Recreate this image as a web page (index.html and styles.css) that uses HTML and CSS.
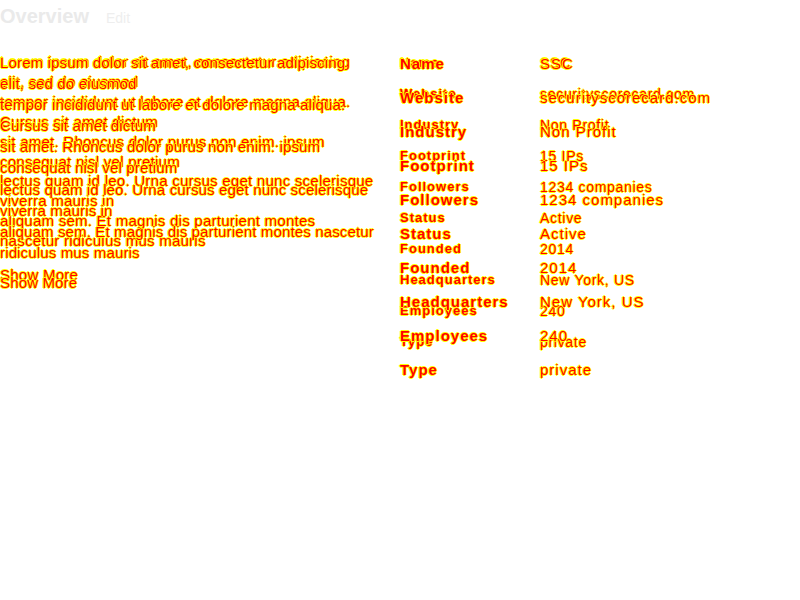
FILE: index.html
```html
<!DOCTYPE html>
<html>
<head>
<meta charset="utf-8">
<link rel="stylesheet" href="styles.css">
</head>
<body>
<header class="top">
  <h1 class="title">Overview</h1>
  <span class="edit">Edit</span>
</header>
<main class="stack">
  <section class="layer layer-a">
    <div class="about">
      <div class="text">
        <span>Lorem ipsum dolor sit amet, consectetur adipiscing</span>
        <span>elit, sed do eiusmod</span>
        <span>tempor incididunt ut labore et dolore magna aliqua.</span>
        <span>Cursus sit amet dictum</span>
        <span>sit amet. Rhoncus dolor purus non enim. ipsum</span>
        <span>consequat nisl vel pretium</span>
        <span>lectus quam id leo. Urna cursus eget nunc scelerisque</span>
        <span>viverra mauris in</span>
        <span>aliquam sem. Et magnis dis parturient montes</span>
        <span>nascetur ridiculus mus mauris</span>
      </div>
      <div class="more">Show More</div>
    </div>
    <dl class="facts">
      <div class="row"><dt>Name</dt><dd>SSC</dd></div>
      <div class="row"><dt>Website</dt><dd>securityscorecard.com</dd></div>
      <div class="row"><dt>Industry</dt><dd>Non Profit</dd></div>
      <div class="row"><dt>Footprint</dt><dd>15 IPs</dd></div>
      <div class="row"><dt>Followers</dt><dd>1234 companies</dd></div>
      <div class="row"><dt>Status</dt><dd>Active</dd></div>
      <div class="row"><dt>Founded</dt><dd>2014</dd></div>
      <div class="row"><dt>Headquarters</dt><dd>New York, US</dd></div>
      <div class="row"><dt>Employees</dt><dd>240</dd></div>
      <div class="row"><dt>Type</dt><dd>private</dd></div>
    </dl>
  </section>
  <section class="layer layer-b">
    <div class="about">
      <div class="text">
        <span>Lorem ipsum dolor sit amet, consectetur adipiscing</span>
        <span>elit, sed do eiusmod</span>
        <span>tempor incididunt ut labore et dolore magna aliqua.</span>
        <span>Cursus sit amet dictum</span>
        <span>sit amet. Rhoncus dolor purus non enim. ipsum</span>
        <span>consequat nisl vel pretium</span>
        <span>lectus quam id leo. Urna cursus eget nunc scelerisque</span>
        <span>viverra mauris in</span>
        <span>aliquam sem. Et magnis dis parturient montes nascetur</span>
        <span>ridiculus mus mauris</span>
      </div>
      <div class="more">Show More</div>
    </div>
    <dl class="facts">
      <div class="row"><dt>Name</dt><dd>SSC</dd></div>
      <div class="row"><dt>Website</dt><dd>securityscorecard.com</dd></div>
      <div class="row"><dt>Industry</dt><dd>Non Profit</dd></div>
      <div class="row"><dt>Footprint</dt><dd>15 IPs</dd></div>
      <div class="row"><dt>Followers</dt><dd>1234 companies</dd></div>
      <div class="row"><dt>Status</dt><dd>Active</dd></div>
      <div class="row"><dt>Founded</dt><dd>2014</dd></div>
      <div class="row"><dt>Headquarters</dt><dd>New York, US</dd></div>
      <div class="row"><dt>Employees</dt><dd>240</dd></div>
      <div class="row"><dt>Type</dt><dd>private</dd></div>
    </dl>
  </section>
</main>
</body>
</html>
```
FILE: styles.css
```css
html, body {
  margin: 0;
  padding: 0;
  background: #ffffff;
  font-family: "Liberation Sans", Arial, sans-serif;
}

.top {
  display: flex;
  align-items: baseline;
  gap: 17px;
  height: 36px;
  padding-top: 3px;
  box-sizing: border-box;
}

.title {
  margin: 0;
  font-size: 20px;
  font-weight: bold;
  color: #eaeaea;
  line-height: 26px;
}

.edit {
  font-size: 14px;
  color: #eeeeee;
}

.stack {
  display: grid;
  padding-top: 16px;
}

.layer {
  grid-area: 1 / 1;
  display: flex;
  color: #ff0000;
  text-shadow: 1px 0 0 #ffff00, -1px 0 0 #ffff00, 0 1px 0 #ffff00, 0 -1px 0 #ffff00;
}

.about {
  width: 400px;
  font-size: 15px;
}

.text {
  display: flex;
  flex-direction: column;
}

.layer-a .about { letter-spacing: 0.25px; }
.layer-b .about { letter-spacing: 0.15px; }

.layer-a .text { line-height: 19.9px; }
.layer-b .text { line-height: 21.1px; }

.layer-a .more { margin-top: 15px; }
.layer-b .more { margin-top: 11px; }

.facts {
  margin: 3px 0 0;
  display: flex;
  flex-direction: column;
}

.row {
  display: flex;
}

dt {
  width: 140px;
  font-weight: bold;
}

dd {
  margin: 0;
}

.layer-a .facts { font-size: 13px; }
.layer-a .row { height: 31px; }
.layer-a dt { letter-spacing: 1px; }
.layer-a dd { font-size: 14px; letter-spacing: 0.7px; }

.layer-b .facts { font-size: 15px; }
.layer-b .row { height: 34px; }
.layer-b dt { letter-spacing: 1px; }
.layer-b dd { letter-spacing: 1px; }
```
